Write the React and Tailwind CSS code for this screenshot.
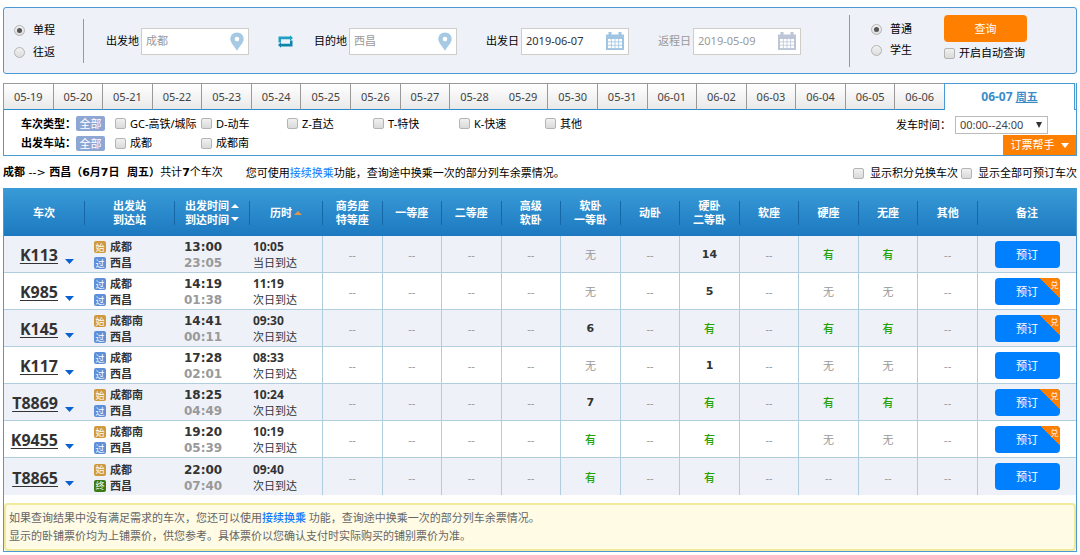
import { Fragment } from "react";

const DATES = [
  "05-19", "05-20", "05-21", "05-22", "05-23", "05-24", "05-25", "05-26", "05-27", "05-28",
  "05-29", "05-30", "05-31", "06-01", "06-02", "06-03", "06-04", "06-05", "06-06",
];

const TYPES = ["GC-高铁/城际", "D-动车", "Z-直达", "T-特快", "K-快速", "其他"];

const SEATS = [
  ["商务座", "特等座"], ["一等座"], ["二等座"], ["高级", "软卧"], ["软卧", "一等卧"], ["动卧"],
  ["硬卧", "二等卧"], ["软座"], ["硬座"], ["无座"], ["其他"],
];

const N = "--";
const TRAINS = [
  { no: "K113", from: ["始", "成都"], to: ["过", "西昌"], dep: "13:00", arr: "23:05", dur: "10:05", day: "当日到达", seats: [N, N, N, N, "无", N, "14", N, "有", "有", N], swap: false },
  { no: "K985", from: ["过", "成都"], to: ["过", "西昌"], dep: "14:19", arr: "01:38", dur: "11:19", day: "次日到达", seats: [N, N, N, N, "无", N, "5", N, "无", "无", N], swap: true },
  { no: "K145", from: ["始", "成都南"], to: ["过", "西昌"], dep: "14:41", arr: "00:11", dur: "09:30", day: "次日到达", seats: [N, N, N, N, "6", N, "有", N, "有", "有", N], swap: true },
  { no: "K117", from: ["过", "成都"], to: ["过", "西昌"], dep: "17:28", arr: "02:01", dur: "08:33", day: "次日到达", seats: [N, N, N, N, "无", N, "1", N, "无", "无", N], swap: false },
  { no: "T8869", from: ["始", "成都南"], to: ["过", "西昌"], dep: "18:25", arr: "04:49", dur: "10:24", day: "次日到达", seats: [N, N, N, N, "7", N, "有", N, "有", "有", N], swap: true },
  { no: "K9455", from: ["始", "成都南"], to: ["过", "西昌"], dep: "19:20", arr: "05:39", dur: "10:19", day: "次日到达", seats: [N, N, N, N, "有", N, "有", N, "无", "无", N], swap: true },
  { no: "T8865", from: ["始", "成都"], to: ["终", "西昌"], dep: "22:00", arr: "07:40", dur: "09:40", day: "次日到达", seats: [N, N, N, N, "有", N, "有", N, N, N, N], swap: false },
];

function Radio({ name, label, checked }) {
  return (
    <label className="flex items-center gap-2">
      <input
        type="radio"
        name={name}
        defaultChecked={checked}
        className="grid size-[11px] shrink-0 appearance-none place-content-center rounded-full border border-[#b4b4b4] bg-linear-to-b from-[#f2f2f2] to-[#dcdcdc] before:size-[5px] before:rounded-full checked:before:bg-[#555]"
      />
      {label}
    </label>
  );
}

function Check({ label, gap = "gap-1" }) {
  return (
    <label className={"flex items-center whitespace-nowrap " + gap}>
      <input
        type="checkbox"
        className="size-[11px] shrink-0 appearance-none rounded-xs border border-[#b4b4b4] bg-linear-to-b from-[#f0f0f0] to-[#dadada] checked:bg-[#3b99fc]"
      />
      {label}
    </label>
  );
}

function PinIcon() {
  return (
    <svg viewBox="0 0 14 19" className="h-[19px] w-[14px]" aria-hidden="true">
      <path
        fillRule="evenodd"
        fill="#a6c9e4"
        d="M7 0.5C3.2 0.5 0.3 3.3 0.3 7c0 3.600 3.300 6.300 6.700 11.700C10.400 13.300 13.700 10.600 13.700 7 13.700 3.300 10.800 0.500 7 0.500zM7 4.800a2.300 2.300 0 1 1 0 4.600 2.300 2.300 0 0 1 0-4.600z"
      />
    </svg>
  );
}

function CalendarIcon({ color }) {
  return (
    <svg viewBox="0 0 18 18" className="size-[18px]" aria-hidden="true">
      <path fill={color} d="M0 2.500h2.500V0h3v2.500h7V0h3v2.500H18V18H0z" />
      {[7, 10.3, 13.6].map((y) =>
        [2, 5.7, 9.4, 13.1].map((x) => (
          <rect key={x + "-" + y} x={x} y={y} width="2.900" height="2.500" fill="#fff" />
        ))
      )}
    </svg>
  );
}

function Field({ id, label, value, muted, dim, children }) {
  return (
    <div className="flex items-center gap-[2px]">
      <label htmlFor={id} className={"whitespace-nowrap " + (dim ? "text-[#999]" : "text-black")}>{label}</label>
      <div className="flex h-[27px] w-[108px] items-center border border-[#cfcdc7] bg-white pr-1 pl-1">
        <input
          id={id}
          type="text"
          defaultValue={value}
          className={"w-0 min-w-0 flex-1 bg-transparent outline-none " + (muted ? "text-[#999]" : "text-[#333]")}
        />
        {children}
      </div>
    </div>
  );
}

function SearchPanel() {
  return (
    <form className="flex h-[67px] items-center rounded-[3px] border border-[#4a9ad4] bg-[#eef1f8] pt-px">
      <div className="flex w-[80px] flex-col gap-[6px] border-r border-[#5aaede] py-[3px] pl-[10px] leading-4">
        <Radio name="trip" label="单程" checked />
        <Radio name="trip" label="往返" />
      </div>
      <div className="flex flex-1 items-center justify-between pr-12 pl-[22px]">
        <Field id="from" label="出发地" value="成都" muted><PinIcon /></Field>
        <div className="flex items-center gap-[21px]">
          <button type="button" aria-label="交换出发地和目的地">
            <svg viewBox="0 0 15 13" className="h-[13px] w-[15px]" aria-hidden="true">
              <path fill="#1f9fc4" d="M0.500 1.500H12V0.300l3 2.700-3 2.700V4.300H3V7.500H0.500z" />
              <path fill="#0d86ad" d="M14.500 11.500H3v1.200L0 10l3-2.700v1.400H12V5.500h2.500z" />
            </svg>
          </button>
          <Field id="to" label="目的地" value="西昌" muted><PinIcon /></Field>
        </div>
        <Field id="depart" label="出发日" value="2019-06-07"><CalendarIcon color="#9fc5e2" /></Field>
        <Field id="return" label="返程日" value="2019-05-09" muted dim><CalendarIcon color="#bcc6d6" /></Field>
      </div>
      <div className="flex h-[52px] items-start border-l border-[#5aaede] pr-[49px] pl-[21px]">
        <div className="flex w-[73px] flex-col gap-[5px] pt-[6px] leading-4">
          <Radio name="kind" label="普通" checked />
          <Radio name="kind" label="学生" />
        </div>
        <div className="flex flex-col gap-[3px]">
          <button type="button" className="h-[27px] w-[83px] rounded-[4px] bg-[#ff8000] text-white">查询</button>
          <Check label="开启自动查询" />
        </div>
      </div>
    </form>
  );
}

function Badge() {
  return <button type="button" className="mr-[10px] h-[15px] w-[29px] rounded-xs bg-[#8ea6d4] leading-[15px] text-white">全部</button>;
}

function Filters() {
  return (
    <section>
      <nav className="flex h-[27px]">
        {DATES.map((d) => (
          <a
            key={d}
            href={"#" + d}
            className={
              "flex flex-1 items-center justify-center border-t border-b border-t-[#999] border-b-[#298cce] bg-linear-to-b from-white to-[#e9e9e9] pt-px text-[#444] " +
              (d === "05-29" ? "" : "border-l border-l-[#999]")
            }
          >
            {d}
          </a>
        ))}
        <a href="#06-07" className="flex w-[131px] items-center justify-center border-t border-r border-l border-[#4a9ad4] bg-white font-bold text-[#3a8cc8]">
          <span className="text-xs">06-07&nbsp;</span><span className="underline">周五</span>
        </a>
        <div className="w-[2px] border-r border-b border-[#4a9ad4] bg-[#dcebf6]" />
      </nav>
      <div className="flex justify-between border-r border-b border-l border-[#4a9ad4] pl-[17px]">
        <div className="flex flex-col gap-px pt-1 pb-[3px]">
          <div className="flex h-[19px] items-center">
            <strong className="w-[55px] text-black">车次类型：</strong>
            <Badge />
            {TYPES.map((t) => (
              <div key={t} className="w-[86px]"><Check label={t} /></div>
            ))}
          </div>
          <div className="flex h-[18px] items-center">
            <strong className="w-[55px] text-black">出发车站：</strong>
            <Badge />
            {["成都", "成都南"].map((t) => (
              <div key={t} className="w-[86px]"><Check label={t} /></div>
            ))}
          </div>
        </div>
        <div className="flex flex-col items-end justify-between">
          <div className="mt-[6px] mr-7 flex items-center gap-1">
            <label htmlFor="time">发车时间：</label>
            <div className="relative flex">
              <select id="time" className="h-[18px] w-[93px] appearance-none border border-[#bbb] bg-white pl-1 leading-4 text-[#444]">
                <option>00:00--24:00</option>
              </select>
              <svg viewBox="0 0 6 6" className="pointer-events-none absolute top-[6px] right-[6px] size-[6px]" aria-hidden="true">
                <path d="M0 0h6L3 6z" fill="#333" />
              </svg>
            </div>
          </div>
          <button type="button" className="flex h-5 w-[73px] items-center justify-center gap-[6px] bg-[#ff8000] text-white">
            订票帮手
            <svg viewBox="0 0 8 5" className="h-[5px] w-2" aria-hidden="true"><path d="M0 0h8L4 5z" fill="#fff" /></svg>
          </button>
        </div>
      </div>
    </section>
  );
}

function Summary() {
  return (
    <div className="flex h-8 items-center justify-between pt-[2px] whitespace-nowrap">
      <div className="flex gap-[23px]">
        <p className="font-['DejaVu_Sans','Noto_Sans_CJK_SC',sans-serif]">
          <b>成都</b> --&gt; <b>西昌（6月7日&nbsp; 周五）</b>共计<b>7</b>个车次
        </p>
        <p>您可使用<a href="#transfer" className="text-[#0a7bff]">接续换乘</a>功能，查询途中换乘一次的部分列车余票情况。</p>
      </div>
      <div className="flex gap-[3px]">
        <Check label="显示积分兑换车次" gap="gap-[6px]" />
        <Check label="显示全部可预订车次" gap="gap-[6px]" />
      </div>
    </div>
  );
}

function HeadCell({ lines, children, last }) {
  return (
    <th className="p-0 pt-px font-bold">
      <div className={"flex h-[24px] items-center justify-center gap-[2px] leading-[14px] whitespace-nowrap " + (last ? "" : "border-r border-[#1567a8]")}>
        <span>
          {lines.map((l, i) => (
            <Fragment key={l}>{i > 0 && <br />}{l}</Fragment>
          ))}
        </span>
        {children}
      </div>
    </th>
  );
}

const TAG = { 始: "bg-[#cf9a3c]", 过: "bg-[#5f8fd8]", 终: "bg-[#3c7a16]" };

function Station({ tag, name }) {
  return (
    <div className="flex items-center gap-1">
      <span className={"flex size-3 items-center justify-center rounded-xs text-[9px] leading-none font-normal text-white " + TAG[tag]}>{tag}</span>
      <span>{name}</span>
    </div>
  );
}

function seatStyle(v) {
  if (v === "有") return "text-[#26a306] font-medium";
  if (v === "无" || v === N) return "text-[#999]";
  return "text-[#333] font-bold font-['DejaVu_Sans']";
}

function TrainRow({ t, odd, last }) {
  const line = last ? "" : "border-b border-b-[#b0cedd]";
  return (
    <tr className={"h-[37px] " + (odd ? "bg-[#eef1f8]" : "bg-white")}>
      <td className={"p-0 pt-[2px] " + line}>
        <div className="flex items-center justify-end gap-[7px] pr-[11px]">
          <a href={"#" + t.no} className="text-base leading-5 font-bold text-[#333] underline decoration-1 underline-offset-2">{t.no}</a>
          <svg viewBox="0 0 9 5" className="mt-3 h-[5px] w-[9px]" aria-hidden="true"><path d="M0 0h9L4.500 5z" fill="#0a62d0" /></svg>
        </div>
      </td>
      <td className={"p-0 pt-[2px] pl-[9px] leading-4 font-bold text-[#333] " + line}>
        <Station tag={t.from[0]} name={t.from[1]} />
        <Station tag={t.to[0]} name={t.to[1]} />
      </td>
      <td className={"p-0 pt-[2px] pl-[9px] font-['DejaVu_Sans'] text-xs leading-4 font-bold " + line}>
        <div className="text-[#333]">{t.dep}</div>
        <div className="text-[#999]">{t.arr}</div>
      </td>
      <td className={"border-r border-r-[#b0cedd] p-0 pt-[2px] pl-[3px] leading-4 text-[#333] " + line}>
        <div className="text-xs leading-4 font-bold">{t.dur}</div>
        <div>{t.day}</div>
      </td>
      {t.seats.map((s, i) => (
        <td key={i} className={"border-r border-r-[#b0cedd] p-0 pt-[2px] text-center " + seatStyle(s) + " " + line}>{s}</td>
      ))}
      <td className={"p-0 " + line}>
        <button type="button" className="relative mx-auto block h-[27px] w-[65px] overflow-hidden rounded-[4px] bg-[#0080ff] pt-px text-white">
          预订
          {t.swap && (
            <span className="absolute top-0 right-0 size-5 bg-[linear-gradient(to_top_right,transparent_50%,#ff8000_50%)] pr-px pt-[2px] text-right text-[8px] leading-[9px]">兑</span>
          )}
        </button>
      </td>
    </tr>
  );
}

function Arrow({ up, color }) {
  return (
    <svg viewBox="0 0 8 4" className="h-1 w-2" aria-hidden="true">
      <path d={up ? "M0 4h8L4 0z" : "M0 0h8L4 4z"} fill={color} />
    </svg>
  );
}

function Results() {
  return (
    <section className="border border-t-0 border-[#4a9ad4]">
      <table className="w-full table-fixed border-separate border-spacing-0">
        <colgroup>
          <col className="w-[81px]" />
          <col className="w-[90px]" />
          <col className="w-[75px]" />
          <col className="w-[73px]" />
          {SEATS.map((s, i) => <col key={i} />)}
          <col className="w-[98px]" />
        </colgroup>
        <thead>
          <tr className="h-12 bg-linear-to-b from-[#399bd8] to-[#1c79c0] text-white">
            <HeadCell lines={["车次"]} />
            <HeadCell lines={["出发站", "到达站"]} />
            <HeadCell lines={["出发时间", "到达时间"]}>
              <span className="flex flex-col gap-[9px]"><Arrow up color="#fff" /><Arrow color="#fff" /></span>
            </HeadCell>
            <HeadCell lines={["历时"]}><Arrow up color="#e0944a" /></HeadCell>
            {SEATS.map((s) => <HeadCell key={s.join()} lines={s} />)}
            <HeadCell lines={["备注"]} last />
          </tr>
        </thead>
        <tbody>
          {TRAINS.map((t, i) => (
            <TrainRow key={t.no} t={t} odd={i % 2 === 0} last={i === TRAINS.length - 1} />
          ))}
        </tbody>
      </table>
      <div className="mt-2 rounded-[4px] border-2 border-[#f1ea9c] bg-[#fffbe5] px-[3px] py-1 leading-[18px] text-[#666]">
        <p>如果查询结果中没有满足需求的车次，您还可以使用<a href="#transfer" className="font-medium text-[#0a7bff]">接续换乘</a> 功能，查询途中换乘一次的部分列车余票情况。</p>
        <p>显示的卧铺票价均为上铺票价，供您参考。具体票价以您确认支付时实际购买的铺别票价为准。</p>
      </div>
    </section>
  );
}

export default function App() {
  return (
    <main className="min-h-screen bg-white px-[3px] pt-[7px] font-['Noto_Sans','Noto_Sans_CJK_SC',sans-serif] text-[11px] leading-4 text-black">
      <SearchPanel />
      <div className="pt-[9px]"><Filters /></div>
      <Summary />
      <Results />
    </main>
  );
}
